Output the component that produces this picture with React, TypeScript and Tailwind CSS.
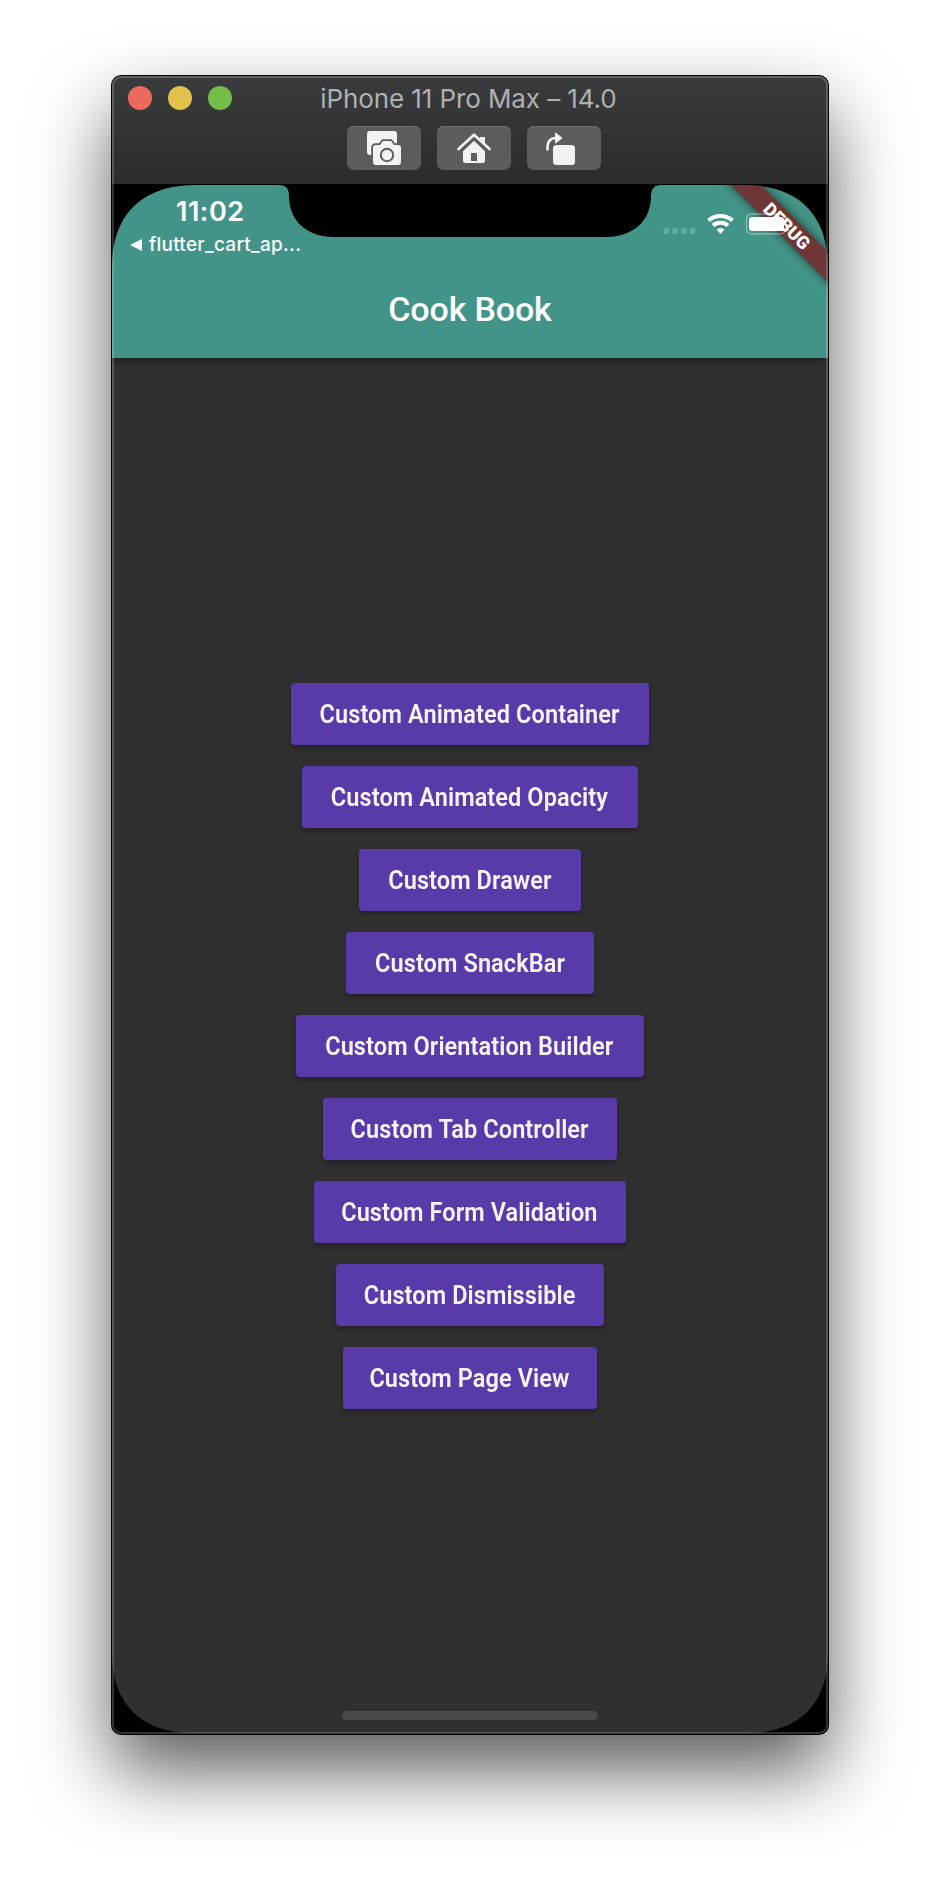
import React from "react";

const buttons = [
  { label: "Custom Animated Container", width: "w-[358px]" },
  { label: "Custom Animated Opacity", width: "w-[336px]" },
  { label: "Custom Drawer", width: "w-[222px]" },
  { label: "Custom SnackBar", width: "w-[248px]" },
  { label: "Custom Orientation Builder", width: "w-[348px]" },
  { label: "Custom Tab Controller", width: "w-[294px]" },
  { label: "Custom Form Validation", width: "w-[312px]" },
  { label: "Custom Dismissible", width: "w-[268px]" },
  { label: "Custom Page View", width: "w-[254px]" },
];

const toolButton =
  "flex h-11 w-[74px] items-center justify-center rounded-[7px] bg-[#5b5c5e] shadow-[inset_0_1px_0_#727375]";

function TitleBar() {
  return (
    <header className="h-[108px] bg-linear-to-b from-[#3a3b3d] to-[#2b2c2e]">
      <div className="grid h-[50px] grid-cols-[1fr_auto_1fr] items-start pt-2.5">
        <div className="flex gap-4 pl-4">
          <span className="h-6 w-6 rounded-full bg-[#ed695e]" />
          <span className="h-6 w-6 rounded-full bg-[#e1c04c]" />
          <span className="h-6 w-6 rounded-full bg-[#72be47]" />
        </div>
        <h1 className="-mt-px mr-[3px] font-['Inter',sans-serif] text-[26px] leading-7 tracking-[-0.1px] whitespace-nowrap text-[#b0b1b2]">
          iPhone 11 Pro Max – 14.0
        </h1>
      </div>
      <div className="flex justify-center gap-4 pl-2">
        <button className={toolButton} aria-label="Screenshot">
          <svg width="74" height="44" viewBox="0 0 74 44">
            <rect x="20" y="5" width="30" height="24" rx="3" fill="#f1f2f4" />
            <path d="M50 19V29H25V19z" fill="#5b5c5e" />
            <path d="M29 19h4l3-4h8l3 4h4q3 0 3 3v14q0 3-3 3H29q-3 0-3-3V22q0-3 3-3z" fill="#f1f2f4" stroke="#5b5c5e" strokeWidth="3.6" paintOrder="stroke" />
            <circle cx="40" cy="29" r="6.2" fill="none" stroke="#5b5c5e" strokeWidth="2" />
          </svg>
        </button>
        <button className={toolButton} aria-label="Home">
          <svg width="74" height="44" viewBox="0 0 74 44">
            <path d="M26 25 37 14l11 11v9.500q0 2.500-2.500 2.500h-17q-2.500 0-2.500-2.500z" fill="#f1f2f4" />
            <path d="M34 27h6v8h-6z" fill="#5b5c5e" />
            <path d="M43 11h5v8h-5z" fill="#f1f2f4" />
            <path d="M21.500 23.500 37 9l15.500 14.500" fill="none" stroke="#5b5c5e" strokeWidth="5.500" transform="translate(0 2)" />
            <path d="M21.500 23 37 8.800 52.500 23" fill="none" stroke="#f1f2f4" strokeWidth="2.600" strokeLinecap="round" />
          </svg>
        </button>
        <button className={toolButton} aria-label="Rotate">
          <svg width="74" height="44" viewBox="0 0 74 44">
            <rect x="26" y="19" width="22" height="20" rx="3.500" fill="#f1f2f4" />
            <path d="M20.500 23.500Q20 12 29 12" fill="none" stroke="#f1f2f4" strokeWidth="2.600" strokeLinecap="round" />
            <path d="M28.500 7 35 12l-6.500 5z" fill="#f1f2f4" stroke="#f1f2f4" strokeLinejoin="round" />
          </svg>
        </button>
      </div>
    </header>
  );
}

function StatusBar() {
  return (
    <div className="relative flex h-[79px] justify-between">
      <div className="pl-[17px] text-white">
        <div className="pt-[11px] pl-[47px] font-['Inter',sans-serif] text-[27px] leading-8 font-semibold tracking-[0.5px]">11:02</div>
        <div className="flex items-center gap-[6px] pt-[5px] font-['Inter',sans-serif] text-[19px] leading-6 font-medium tracking-[0.25px]">
          <svg width="14" height="14" viewBox="0 0 14 14"><path d="M13 1v12L1 7z" fill="white" /></svg>
          flutter_cart_ap...
        </div>
      </div>
      <svg width="180" height="79" viewBox="0 0 180 79">
        <g fill="#5dada0">
          <rect x="15.500" y="43" width="6" height="6" rx="2" />
          <rect x="24" y="43" width="6" height="6" rx="2" />
          <rect x="33" y="43" width="6" height="6" rx="2" />
          <rect x="41.500" y="43" width="6" height="6" rx="2" />
        </g>
        <g fill="none" stroke="white" strokeWidth="4">
          <path d="M60.500 35.500a18 18 0 0 1 24 0" />
          <path d="M65 40.500a11.500 11.500 0 0 1 15 0" />
        </g>
        <path d="m72.500 49-4-4.500q4-3.200 8 0z" fill="white" />
        <rect x="98.500" y="29" width="39" height="20" rx="5" fill="none" stroke="white" strokeOpacity=".35" strokeWidth="1.500" />
        <rect x="101" y="32" width="35" height="14" rx="3" fill="white" />
      </svg>
    </div>
  );
}

function DebugRibbon() {
  return (
    <svg className="pointer-events-none absolute top-0 right-0" width="180" height="174" viewBox="536 0 180 174">
      <defs>
        <filter id="ribbon" x="-30%" y="-100%" width="160%" height="300%">
          <feGaussianBlur stdDeviation="5" />
        </filter>
      </defs>
      <g transform="translate(716 1) rotate(45)">
        <rect x="-130" y="47.400" width="260" height="21.200" fill="black" opacity=".6" filter="url(#ribbon)" />
        <rect x="-130" y="47.400" width="260" height="21.200" fill="#6e3634" />
        <text x="0" y="64.500" fill="white" textAnchor="middle" fontFamily="Roboto, sans-serif" fontWeight="900" fontSize="18">DEBUG</text>
      </g>
    </svg>
  );
}

function ScreenBezel() {
  return (
    <svg className="pointer-events-none absolute inset-0" width="716" height="1550" viewBox="0 0 716 1550">
      <path d="M0 0H716V1550H0ZM0 84V1470C0 1520 30 1549 80 1549H636C686 1549 716 1520 716 1470V84C716 30 686 1 632 1H549Q539 1 539 12C539 36 522 53 494 53H222C194 53 177 36 177 12Q177 1 167 1H84C30 1 0 30 0 84Z" fill="black" fillRule="evenodd" />
    </svg>
  );
}

export default function App() {
  return (
    <div className="flex h-[1882px] w-[940px] items-start overflow-hidden bg-white pt-[76px] pl-[112px]">
      <main className="relative w-[716px] overflow-hidden rounded-[9px] bg-[#303030] shadow-[0_0_0_1px_black,0_36px_76px_rgba(0,0,0,0.65)]">
        <TitleBar />
        <section className="relative h-[1550px] bg-[#303030]">
          <div className="relative h-[174px] bg-[#439488] pt-px shadow-[0_3px_6px_rgba(0,0,0,0.35)]">
            <DebugRibbon />
            <StatusBar />
            <h2 className="pt-[25px] text-center font-['Roboto',sans-serif] text-[34px] leading-10 font-medium tracking-[-0.15px] text-white">Cook Book</h2>
          </div>
          <div className="flex flex-col items-center gap-[21px] pt-[325px]">
            {buttons.map((b) => (
              <button
                key={b.label}
                className={`${b.width} h-[62px] rounded-[4px] bg-[#593aa9] pt-px pr-px font-['Roboto',sans-serif] text-[25px] font-semibold tracking-[0.1px] whitespace-nowrap text-[#f6f4fb] shadow-[0_3px_5px_rgba(0,0,0,0.3)]`}
              >
                <span className="inline-block scale-x-[0.94]">{b.label}</span>
              </button>
            ))}
          </div>
          <div className="mx-auto mt-[302px] h-[9px] w-[256px] rounded-full bg-[#4a4a4a]" />
          <ScreenBezel />
        </section>
        <div className="pointer-events-none absolute inset-0 rounded-[9px] shadow-[inset_0_0_0_2px_rgba(255,255,255,0.2)]" />
      </main>
    </div>
  );
}
